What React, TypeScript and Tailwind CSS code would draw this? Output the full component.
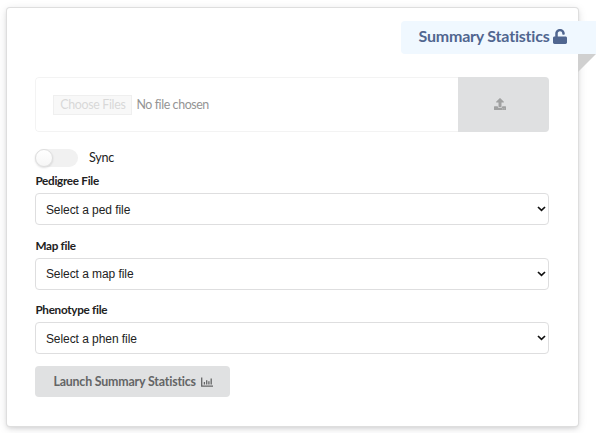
import { FaUnlock, FaUpload } from "react-icons/fa";

function SelectField({ label, text }: { label: string; text: string }) {
  return (
    <div className="mb-[13px] h-[51.5px]">
      <div className="mb-[5px] h-[15px] text-[11.7px] leading-[15px] font-bold tracking-[-0.28px] whitespace-nowrap text-[#212121]">
        {label}
      </div>
      <div className="flex h-[32px] items-center justify-between rounded-[4px] border border-[#dededf] pr-[2px] pl-[9.5px] font-['Liberation_Sans',sans-serif] text-[12px] leading-[16px] text-[#222]">
        <span className="relative top-[0.5px] tracking-[-0.06px]">{text}</span>
        <svg className="h-[6px] w-[9px]" viewBox="0 0 9 6" fill="none" stroke="#111" strokeWidth="1.7">
          <path d="M1 1l3.5 3.3L8 1" />
        </svg>
      </div>
    </div>
  );
}

export default function App() {
  return (
    <div className="h-[433px] w-[602px] overflow-hidden bg-white pt-[8px] pl-[7px] font-[Lato,sans-serif]">
      <div className="relative h-[418px] w-[571px] rounded-[3px] bg-white pt-[69px] pr-[29px] pl-[28.4px] shadow-[0_0_0_1px_#dedede,0_2px_4px_0_rgba(34,36,38,0.12),0_2px_10px_0_rgba(34,36,38,0.15)]">
        <div className="absolute top-[12.5px] left-[394px] flex h-[33px] w-[195px] items-center gap-[3px] rounded-l-[4px] bg-[#f0f8ff] pb-[2px] pl-[17.5px] text-[16px] leading-[20px] font-bold whitespace-nowrap text-[#506690]">
          <span className="tracking-[-0.2px]">Summary Statistics</span>
          <FaUnlock className="h-[15px] w-[14px]" preserveAspectRatio="none" />
          <svg className="absolute top-[33px] right-0 h-[18px] w-[18px]" viewBox="0 0 18 18">
            <path d="M0 0h18L0 18z" fill="#d0d0d0" />
          </svg>
        </div>

        <div className="flex h-[55px] w-[513.6px] overflow-hidden rounded-[4px]">
          <div className="flex flex-1 items-center gap-[4px] rounded-l-[4px] border border-r-0 border-[#f3f3f3] pl-[17px] text-[12.4px] leading-[16px] text-[#949494]">
            <span className="flex h-[20px] w-[79px] items-center justify-center border border-[#efefef] bg-[#f8f8f8] tracking-[-0.33px] whitespace-nowrap text-[#d8d8d8]">
              Choose Files
            </span>
            <span className="tracking-[-0.4px]">No file chosen</span>
          </div>
          <div className="flex w-[91px] items-center justify-center bg-[#dfe0e1] pr-[7px] pb-[2px]">
            <FaUpload className="size-[12px] text-[#a0a1a1]" />
          </div>
        </div>

        <div className="mt-[17px] flex h-[18px] items-center gap-[11px]">
          <div className="flex h-[18px] w-[42.5px] items-center rounded-full bg-[#f1f1f1]">
            <div className="size-[18px] rounded-full border border-[#dedede] bg-linear-to-b from-white to-[#f6f6f6] shadow-[0_1px_2px_rgba(34,36,38,0.15)]" />
          </div>
          <span className="text-[12.6px] leading-[18px] tracking-[-0.2px] text-[#222]">Sync</span>
        </div>

        <div className="mt-[6px]">
          <SelectField label="Pedigree File" text="Select a ped file" />
          <SelectField label="Map file" text="Select a map file" />
          <SelectField label="Phenotype file" text="Select a phen file" />
        </div>

        <div className="-mt-[1px] flex h-[31px] w-[195px] items-center gap-[5px] rounded-[4px] bg-[#e0e1e2] pt-[1px] pl-[18px] text-[12.4px] leading-[16px] font-bold whitespace-nowrap text-[#646566]">
          <span className="tracking-[-0.18px]">Launch Summary Statistics</span>
          <svg className="h-[10px] w-[12px]" viewBox="0 0 12 10" fill="none" stroke="currentColor" strokeWidth="1.3">
            <path d="M.7.5v8.6H12M3.4 5v2.5M5.7 3.3v4.2M7.9 4.3v3.2M10.2 1.5v6" />
          </svg>
        </div>
      </div>
    </div>
  );
}
